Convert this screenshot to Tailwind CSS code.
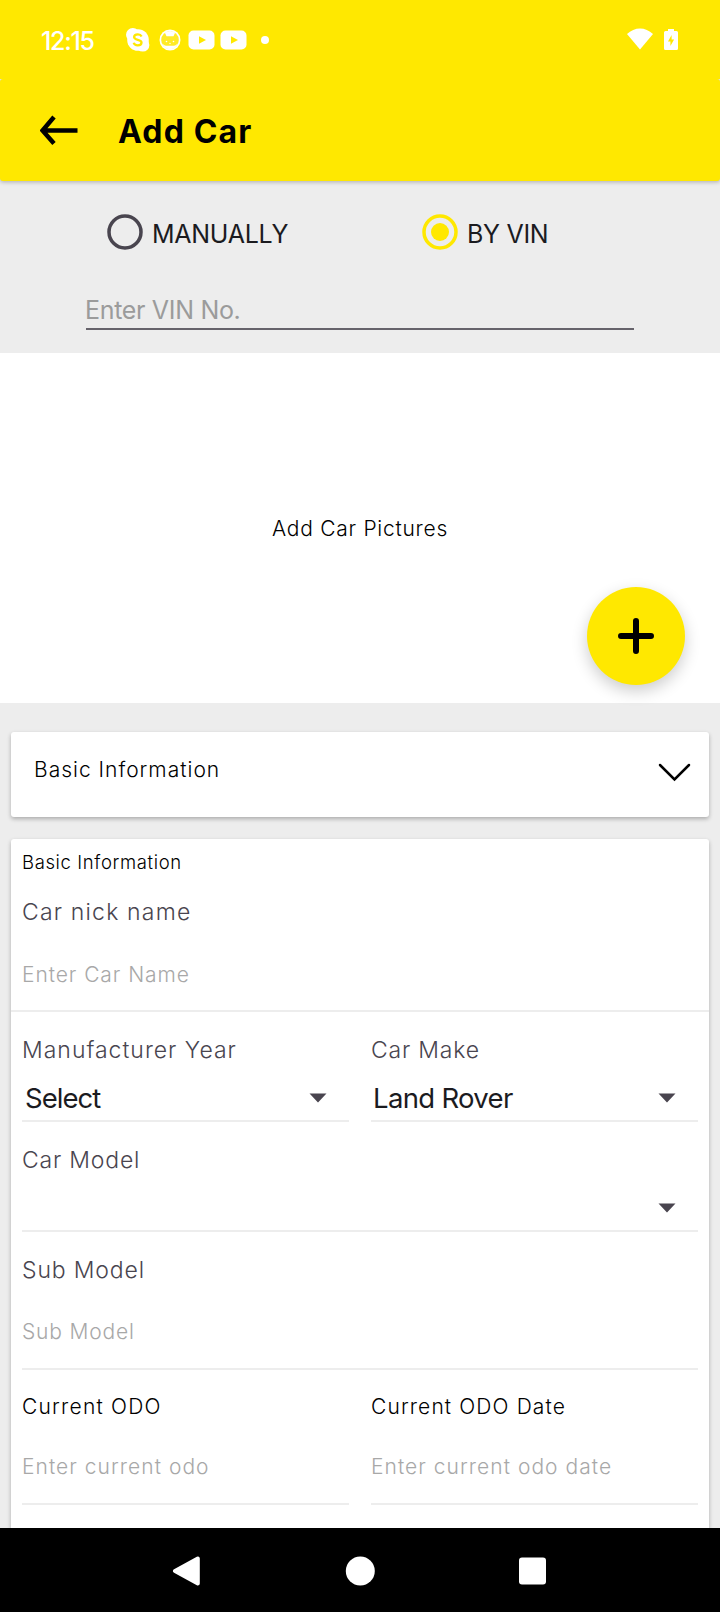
<!DOCTYPE html>
<html lang="en">
<head>
<meta charset="utf-8">
<meta name="viewport" content="width=device-width, initial-scale=1">
<title>Add Car</title>
<script src="https://cdn.jsdelivr.net/npm/@tailwindcss/browser@4"></script>
</head>
<body class="bg-[#ededed]">
<div class="flex h-[1612px] w-[720px] flex-col overflow-hidden whitespace-nowrap bg-[#ededed] font-['Inter','Noto_Sans',sans-serif] text-[#1b1b1f]">

  <!-- Status bar -->
  <div class="z-20 flex h-[79px] shrink-0 items-center bg-[#ffe800] text-white">
    <span class="ml-[41px] w-[83.500px] pt-[2px] text-[25px] leading-[30px] font-medium tracking-[-1.300px]">12:15</span>
    <svg class="h-[26px] w-[26px]" viewBox="0 0 26 26">
      <circle cx="13" cy="13" r="10.8" fill="#fff"/><circle cx="7.8" cy="7.8" r="6.8" fill="#fff"/><circle cx="17.8" cy="18" r="6.6" fill="#fff"/>
      <path d="M16.6 9.4C15.9 8 14.600 7.400 12.900 7.400c-2.200 0-3.800 1-3.800 2.700 0 3.700 7.400 1.800 7.400 5.400 0 1.800-1.500 2.900-3.700 2.900-2 0-3.600-.9-4.100-2.600" fill="none" stroke="#ffe800" stroke-width="2.300"/>
    </svg>
    <svg class="ml-[7px] h-[24px] w-[24px]" viewBox="0 0 24 24">
      <circle cx="12" cy="12" r="10.500" fill="#fff"/>
      <circle cx="12" cy="12" r="8.800" fill="#ffe800" fill-opacity=".85"/>
      <path d="M6.800 4.500 8.500 8.200h7L17.200 4.500 12 3z" fill="#fff"/>
      <path d="M4.500 15.500c2 2.700 4 2.300 7.500 2.300s5.500.4 7.500-2.300c-1 4-4 5.500-7.500 5.500s-6.500-1.500-7.500-5.500z" fill="#fff"/>
      <circle cx="8.500" cy="13.500" r=".8" fill="#fff"/><circle cx="15.500" cy="13.500" r=".8" fill="#fff"/><circle cx="12" cy="15.500" r=".7" fill="#fff"/>
    </svg>
    <svg class="ml-[6px] h-[20px] w-[27px]" viewBox="0 0 27 20"><rect x=".5" y=".5" width="26" height="19" rx="5" fill="#fff"/><path d="M11 6.300v7.400l7-3.700z" fill="#ffe800"/></svg>
    <svg class="ml-[5px] h-[20px] w-[27px]" viewBox="0 0 27 20"><rect x=".5" y=".5" width="26" height="19" rx="5" fill="#fff"/><path d="M11 6.300v7.400l7-3.700z" fill="#ffe800"/></svg>
    <span class="ml-[14px] h-2 w-2 rounded-full bg-white"></span>
    <svg class="mb-px ml-auto h-[22px] w-[26px]" viewBox="0 0 26 22"><path d="M0 6C7.500-1.500 18.500-1.500 26 6L13 21.500z" fill="#fff"/></svg>
    <svg class="mb-px mr-[42px] ml-[11px] h-[22px] w-[14px]" viewBox="0 0 14 22"><path d="M4 1h6v2h2.500q1.500 0 1.500 1.500v16q0 1.500-1.500 1.500h-11Q0 22 0 20.500V4.500q0-1.500 1.500-1.500H4z" fill="#fff"/><path d="M7.600 7 4 13.500h2.400V18l3.700-6.500H7.600z" fill="#ffe800"/></svg>
  </div>

  <!-- App bar -->
  <div class="z-10 flex h-[102px] shrink-0 items-center rounded-[3px] bg-[#ffe800] text-black shadow-[0_1px_4px_rgba(0,0,0,0.28)]">
    <svg class="ml-10 h-[30px] w-[38px]" viewBox="0 0 38 30"><path d="M37.500 15.500H4M14 2 2.500 15.500 14 28.500" fill="none" stroke="#000" stroke-width="4.500"/></svg>
    <h1 class="ml-[40px] pt-[3px] text-[32px] leading-9 font-bold tracking-[1.150px]">Add Car</h1>
  </div>

  <!-- Entry mode and VIN -->
  <div class="flex h-[172px] shrink-0 flex-col">
    <div class="mt-[32px] flex h-[38px] items-center">
      <div class="flex w-[315px] items-center pl-[107px]">
        <svg class="h-9 w-9" viewBox="0 0 36 36"><circle cx="18" cy="18" r="16" fill="none" stroke="#49454f" stroke-width="3.500"/></svg>
        <span class="ml-[9px] pt-[3px] text-[25px] leading-[30px] tracking-[-0.280px]">MANUALLY</span>
      </div>
      <div class="flex items-center pl-[107px]">
        <svg class="h-9 w-9" viewBox="0 0 36 36"><circle cx="18" cy="18" r="16" fill="none" stroke="#ffe800" stroke-width="3.500"/><circle cx="18" cy="18" r="9" fill="#ffe800"/></svg>
        <span class="ml-[9px] pt-[3px] text-[25px] leading-[30px] tracking-[-0.300px]">BY VIN</span>
      </div>
    </div>
    <div class="mx-[86px] mt-[43px] flex h-[36px] items-start border-b-2 border-[#66636b]">
      <span class="-ml-px pt-px text-[25px] leading-[30px] tracking-[-0.320px] text-[#9b9b9b]">Enter VIN No.</span>
    </div>
  </div>

  <!-- Pictures -->
  <div class="relative flex h-[350px] shrink-0 items-center justify-center bg-white">
    <span class="pt-[2px] text-[21px] leading-[26px] font-light tracking-[0.740px] text-black">Add Car Pictures</span>
    <button class="absolute right-[35px] bottom-[18px] flex h-[98px] w-[98px] items-center justify-center rounded-full bg-[#ffe800] shadow-[0_6px_16px_rgba(0,0,0,0.2)]">
      <svg class="h-9 w-9" viewBox="0 0 36 36"><path d="M18 3v30M3 18h30" stroke="#000" stroke-width="6" stroke-linecap="round"/></svg>
    </button>
  </div>

  <!-- Section header card -->
  <div class="mx-[11px] mt-[29px] flex h-[85px] shrink-0 items-center justify-between rounded-[3px] bg-white pr-[18px] pl-[23px] shadow-[0_2px_4px_rgba(0,0,0,0.28)]">
    <span class="pb-[9px] text-[21px] leading-[26px] font-light tracking-[1px] text-black">Basic Information</span>
    <svg class="mb-[6px] h-5 w-[33px]" viewBox="0 0 33 20"><path d="M2 3 16.500 17.500 31 3" fill="none" stroke="#000" stroke-width="2.500" stroke-linecap="round"/></svg>
  </div>

  <!-- Form card -->
  <div class="mx-[11px] mt-[22px] flex h-[689px] shrink-0 flex-col rounded-t-[3px] bg-white text-[21px] shadow-[0_2px_4px_rgba(0,0,0,0.28)]">
    <div class="border-b-2 border-[#ededed] pl-[11px]">
      <div class="flex h-[47px] items-center pt-px text-[18.500px] font-light tracking-[0.630px] text-black">Basic Information</div>
      <div class="flex h-[52px] items-center pt-px text-[23px] font-light tracking-[1.180px] text-[#49454f]">Car nick name</div>
      <div class="flex h-[72px] items-center pt-px font-light tracking-[0.930px] text-[#a8a8a8]">Enter Car Name</div>
    </div>

    <div class="mx-[11px] grid grid-cols-2 gap-x-[22px]">
      <div class="border-b-2 border-[#ededed] pt-6">
        <div class="text-[23px] leading-[28px] font-light tracking-[1px] text-[#49454f]">Manufacturer Year</div>
        <div class="mt-3 flex h-[44px] items-center justify-between pr-[22px] pl-[3px] text-[27.500px] tracking-[-0.950px]">
          <span class="pt-[2px]">Select</span>
          <svg class="h-[10px] w-[18px]" viewBox="0 0 18 10"><path d="M.5 .5h17L9 9.500z" fill="#49454f"/></svg>
        </div>
      </div>
      <div class="border-b-2 border-[#ededed] pt-6">
        <div class="text-[23px] leading-[28px] font-light tracking-[0.800px] text-[#49454f]">Car Make</div>
        <div class="mt-3 flex h-[44px] items-center justify-between pr-[22px] pl-[2px] text-[27.500px] tracking-[-0.670px]">
          <span class="pt-[2px]">Land Rover</span>
          <svg class="h-[10px] w-[18px]" viewBox="0 0 18 10"><path d="M.5 .5h17L9 9.500z" fill="#49454f"/></svg>
        </div>
      </div>
    </div>

    <div class="mx-[11px] border-b-2 border-[#ededed] pt-6">
      <div class="text-[23px] leading-[28px] font-light tracking-[0.800px] text-[#49454f]">Car Model</div>
      <div class="mt-3 flex h-[44px] items-center justify-end pr-[22px]">
        <svg class="h-[10px] w-[18px]" viewBox="0 0 18 10"><path d="M.5 .5h17L9 9.500z" fill="#49454f"/></svg>
      </div>
    </div>

    <div class="mx-[11px] border-b-2 border-[#ededed] pt-6">
      <div class="text-[23px] leading-[28px] font-light tracking-[0.850px] text-[#49454f]">Sub Model</div>
      <div class="flex h-[84px] items-center pt-[12px] font-light tracking-[0.830px] text-[#a8a8a8]">Sub Model</div>
    </div>

    <div class="mx-[11px] grid grid-cols-2 gap-x-[22px]">
      <div class="border-b-2 border-[#ededed] pt-[22px]">
        <div class="leading-[29px] font-light tracking-[1.220px] text-black">Current ODO</div>
        <div class="flex h-[82px] items-center pt-[10px] font-light tracking-[1.040px] text-[#a8a8a8]">Enter current odo</div>
      </div>
      <div class="border-b-2 border-[#ededed] pt-[22px]">
        <div class="leading-[29px] font-light tracking-[1.120px] text-black">Current ODO Date</div>
        <div class="flex h-[82px] items-center pt-[10px] font-light tracking-[1.040px] text-[#a8a8a8]">Enter current odo date</div>
      </div>
    </div>
  </div>

  <!-- System navigation -->
  <div class="z-10 flex h-[84px] shrink-0 items-center bg-black pt-px pl-[172px]">
    <svg class="h-[30px] w-[30px]" viewBox="0 0 30 30"><path d="M3 15 25.800 2.500v25z" fill="#fff" stroke="#fff" stroke-width="4" stroke-linejoin="round"/></svg>
    <svg class="ml-[143px] h-[30px] w-[30px]" viewBox="0 0 30 30"><circle cx="15.300" cy="15" r="14.500" fill="#fff"/></svg>
    <svg class="ml-[143px] h-[30px] w-[30px]" viewBox="0 0 30 30"><rect x="1" y="1.500" width="27" height="27" rx="3" fill="#fff"/></svg>
  </div>
</div>
</body>
</html>
